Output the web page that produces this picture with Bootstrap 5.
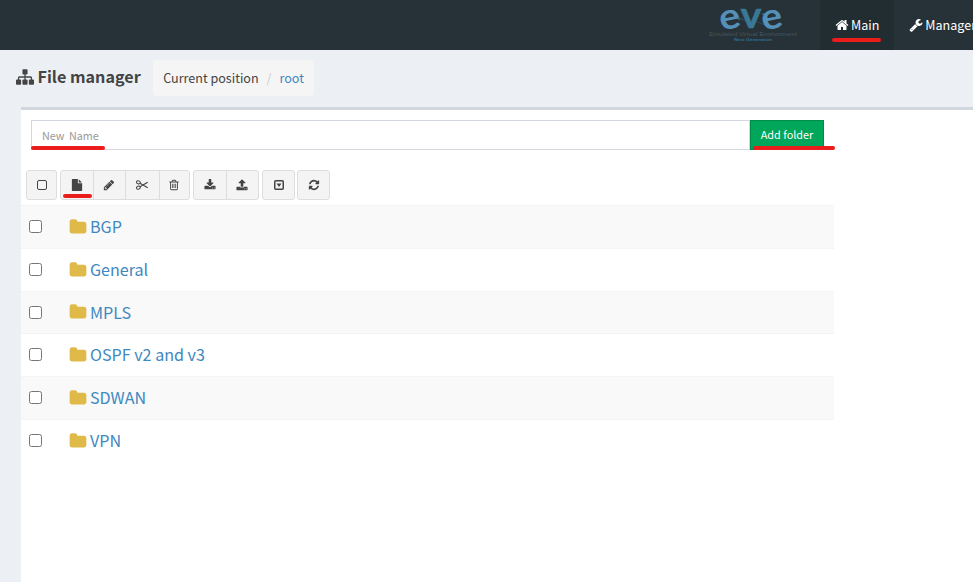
<!DOCTYPE html>
<html lang="en">
<head>
<meta charset="utf-8">
<meta name="viewport" content="width=device-width, initial-scale=1">
<title>File manager</title>
<link href="https://cdn.jsdelivr.net/npm/bootstrap@5.3.0/dist/css/bootstrap.min.css" rel="stylesheet">
<style>
body{font-family:"Noto Sans CJK SC","Noto Sans",sans-serif;font-size:12.55px;line-height:20px;color:#444;background:#ecf0f5;overflow:hidden;height:582px}
a{color:#4088c0;text-decoration:none}
svg.ico{width:12px;height:12px;fill:currentColor;flex:none;display:block}
.topbar{height:50px;background:#263238;padding:0}
.brandmark{width:100px;height:50px;margin-left:703px;margin-right:17px}
.brandmark svg{display:block;overflow:visible}
.topbar .nav-link{height:50px;color:#fff;padding:0 15px;gap:2px;white-space:nowrap;line-height:50px}
.topbar .nav-link.active{background:#222d32}
.topbar .ico{width:14px;height:14px}
.marked{position:relative}
.marked::after{content:"";position:absolute;height:4px;border-radius:2px;background:#ea1c1c;z-index:6;left:var(--l);right:var(--r);bottom:var(--b)}
.mk-main{--l:12px;--r:13px;--b:8px}
.mk-name{--l:0px;--r:645px;--b:0px}
.mk-add{--l:3px;--r:-11px;--b:0px}
.mk-file{--l:2px;--r:1px;--b:1px}
.pagehead{height:57px;padding:10px 0 0 16px}
.pagehead h1{font-size:16.15px;font-weight:700;line-height:32px;gap:3.5px}
.pagehead h1 .ico{width:18px;height:18px;margin-top:1px}
.crumbs{height:36px;border-radius:4px;background:#f5f5f5;padding:0 10px;margin-left:12.5px}
.crumbs .breadcrumb-item{line-height:36px;color:#444}
.crumbs .breadcrumb-item+.breadcrumb-item{padding-left:8px}
.crumbs .breadcrumb-item+.breadcrumb-item::before{padding-right:8px;color:#ccc}
.panelbox{margin-left:21px;height:475px;border-top:3px solid #d2d6de;background:#fff}
.newfolder{width:793px;margin-left:10px;padding-top:10px}
.newfolder .form-control{height:30px;border:1px solid #d2d6de;border-radius:0;padding:1px 10px;font-size:10.8px;word-spacing:2px;width:100%}
.newfolder .form-control::placeholder{color:#999;opacity:1}
.btn-add{height:30px;width:74px;border:1px solid #008d4c;background:#00a65a;color:#fff;border-radius:0;font-size:10.85px;padding:0 0 2px;line-height:26px}
.tools{padding:20px 0 0 5px;gap:3px}
.tools .btn{height:30px;border:1px solid #ddd;background:#f4f4f4;color:#444;border-radius:3px;padding:0;display:flex;align-items:center;justify-content:center}
.tools .btn-group>.btn:not(:last-child){border-top-right-radius:0;border-bottom-right-radius:0}
.tools .btn-group>.btn:not(:first-child){border-top-left-radius:0;border-bottom-left-radius:0}
.tools .btn-group .ico{margin-right:1px}
.w31{width:31px}.w33{width:33px}.w34{width:34px}.w35{width:35px}
.tools .btn-last{margin-left:-1px}
.folders{width:813px;margin-top:5px}
.folderrow{height:42.75px;border-top:1px solid #f4f4f4;padding-left:8px}
.folderrow:nth-child(odd){background:#f9f9f9}
.folderrow .form-check-input{width:13px;height:13px;margin:0 0 .4px;border:1px solid #767676;border-radius:2.5px;background:#fff}
.folderrow a{margin-left:27px;font-size:16.1px;gap:3px}
.folderrow a span{line-height:24px;padding-bottom:1.6px}
.folderrow .ico{width:18px;height:18px;color:#dfba49}
</style>
<script src="https://cdn.jsdelivr.net/npm/bootstrap@5.3.0/dist/js/bootstrap.bundle.min.js"></script>
</head>
<body>
<nav class="topbar d-flex">
  <a class="brandmark flex-shrink-0" href="#" aria-label="EVE">
    <svg width="100" height="50" viewBox="0 0 100 50">
      <g stroke="#31586a" stroke-width=".6" fill="#3a6f8a"><path d="M28 12 45 23M60 13 67 20M36 19 50 20 64 26" fill="none"/><circle cx="36" cy="19" r="1"/><circle cx="60" cy="14" r="1"/><circle cx="65" cy="20" r="1"/></g>
      <g font-family="Lato,sans-serif" font-weight="700" font-size="36">
        <text x="16.500" y="28.800" fill="#5590b8" textLength="21" lengthAdjust="spacingAndGlyphs" transform="rotate(-12 27 20)">e</text>
        <text x="37.500" y="28.300" fill="#3a7896" stroke="#3a7896" stroke-width=".5" textLength="21" lengthAdjust="spacingAndGlyphs">v</text>
        <text x="58.500" y="28.800" fill="#5590b8" textLength="21" lengthAdjust="spacingAndGlyphs" transform="rotate(-12 69 20)">e</text>
      </g>
      <text x="6" y="36" fill="#48545b" font-family="Liberation Sans,sans-serif" font-size="5.500" textLength="88" lengthAdjust="spacingAndGlyphs">Emulated Virtual Environment</text>
      <text x="31" y="41.300" fill="#32718d" font-family="Liberation Sans,sans-serif" font-weight="700" font-size="4" textLength="38" lengthAdjust="spacingAndGlyphs">Next Generation</text>
    </svg>
  </a>
  <a class="nav-link active d-flex align-items-center marked mk-main" href="#"><svg class="ico" viewBox="0 0 1792 1792"><path d="M1472 992v480q0 26-19 45t-45 19h-384v-384h-256v384h-384q-26 0-45-19t-19-45v-480q0-1 .5-3t.5-3l575-474 575 474q1 2 1 6zm223-69l-62 74q-8 9-21 11h-3q-13 0-21-7l-692-577-692 577q-12 8-24 7-13-2-21-11l-62-74q-8-10-7-23.500t11-21.500l719-599q32-26 76-26t76 26l244 204v-195q0-14 9-23t23-9h192q14 0 23 9t9 23v408l219 182q10 8 11 21.500t-7 23.500z"/></svg>Main</a>
  <a class="nav-link d-flex align-items-center" href="#"><svg class="ico" viewBox="0 0 1792 1792"><path d="M448 1472q0-26-19-45t-45-19-45 19-19 45 19 45 45 19 45-19 19-45zm644-420l-682 682q-37 37-90 37-52 0-91-37l-106-108q-38-36-38-90 0-53 38-91l681-681q39 98 114.500 173.500t173.500 114.500zm634-435q0 39-23 106-47 134-164.500 217.500t-258.500 83.500q-185 0-316.500-131.500t-131.500-316.500 131.500-316.500 316.500-131.500q58 0 121.500 16.500t107.500 46.500q16 11 16 28t-16 28l-293 169v224l193 107q5-3 79-48.500t135.500-81 70.500-35.500q15 0 23.500 10t8.500 25z"/></svg>Management</a>
</nav>

<header class="pagehead d-flex align-items-start">
  <h1 class="m-0 d-flex align-items-center"><svg class="ico" viewBox="0 0 1792 1792"><path d="M1792 1248v320q0 40-28 68t-68 28h-320q-40 0-68-28t-28-68v-320q0-40 28-68t68-28h96v-192h-512v192h96q40 0 68 28t28 68v320q0 40-28 68t-68 28h-320q-40 0-68-28t-28-68v-320q0-40 28-68t68-28h96v-192h-512v192h96q40 0 68 28t28 68v320q0 40-28 68t-68 28h-320q-40 0-68-28t-28-68v-320q0-40 28-68t68-28h96v-192q0-52 38-90t90-38h512v-192h-96q-40 0-68-28t-28-68v-320q0-40 28-68t68-28h320q40 0 68 28t28 68v320q0 40-28 68t-68 28h-96v192h512q52 0 90 38t38 90v192h96q40 0 68 28t28 68z"/></svg><span>File manager</span></h1>
  <ol class="breadcrumb crumbs mb-0 flex-nowrap"><li class="breadcrumb-item">Current position</li><li class="breadcrumb-item"><a href="#">root</a></li></ol>
</header>

<main class="panelbox">
  <form class="newfolder d-flex">
    <div class="flex-grow-1 marked mk-name"><input class="form-control" type="text" placeholder="New Name"></div>
    <div class="marked mk-add"><button class="btn btn-add d-block" type="button">Add folder</button></div>
  </form>
  <div class="tools d-flex">
    <button class="btn w31" type="button" aria-label="Select all"><svg class="ico" viewBox="0 0 12 12"><rect x="1.500" y="1.500" width="9" height="9" rx="1.500" fill="none" stroke="currentColor"/></svg></button>
    <div class="btn-group">
      <button class="btn w34 marked mk-file" type="button" aria-label="New lab"><svg class="ico" viewBox="0 0 1792 1792"><path d="M1152 512v-472q22 14 36 28l408 408q14 14 28 36h-472zm-128 32q0 40 28 68t68 28h544v1056q0 40-28 68t-68 28h-1344q-40 0-68-28t-28-68v-1600q0-40 28-68t68-28h800v544z"/></svg></button>
      <button class="btn w33" type="button" aria-label="Rename"><svg class="ico" viewBox="0 0 1792 1792"><path d="M491 1536l91-91-235-235-91 91v107h128v128h107zm523-928q0-22-22-22-10 0-17 7l-542 542q-7 7-7 17 0 22 22 22 10 0 17-7l542-542q7-7 7-17zm-54-192l416 416-832 832h-416v-416zm683 96q0 53-37 90l-166 166-416-416 166-165q36-38 90-38 53 0 91 38l235 234q37 39 37 91z"/></svg></button>
      <button class="btn w35" type="button" aria-label="Cut"><svg class="ico" viewBox="0 0 12 12"><g fill="none" stroke="currentColor"><ellipse cx="2.400" cy="3.300" rx="1.900" ry="1.500" transform="rotate(20 2.400 3.300)"/><ellipse cx="2.400" cy="8.700" rx="1.900" ry="1.500" transform="rotate(-20 2.400 8.700)"/><path d="M4 4.300 11.700 8.800M4 7.700 11.700 3.200" stroke-width="1.100"/></g></svg></button>
      <button class="btn w31" type="button" aria-label="Delete"><svg class="ico" viewBox="0 0 1792 1792"><path d="M704 736v576q0 14-9 23t-23 9h-64q-14 0-23-9t-9-23v-576q0-14 9-23t23-9h64q14 0 23 9t9 23zm256 0v576q0 14-9 23t-23 9h-64q-14 0-23-9t-9-23v-576q0-14 9-23t23-9h64q14 0 23 9t9 23zm256 0v576q0 14-9 23t-23 9h-64q-14 0-23-9t-9-23v-576q0-14 9-23t23-9h64q14 0 23 9t9 23zm128 724v-948h-896v948q0 22 7 40.500t14.500 27 10.500 8.500h832q3 0 10.500-8.500t14.500-27 7-40.500zm-672-1076h448l-48-117q-7-9-17-11h-317q-10 2-17 11zm928 32v64q0 14-9 23t-23 9h-96v948q0 83-47 143.500t-113 60.500h-832q-66 0-113-58.500t-47-141.500v-952h-96q-14 0-23-9t-9-23v-64q0-14 9-23t23-9h309l70-167q15-37 54-63t79-26h320q40 0 79 26t54 63l70 167h309q14 0 23 9t9 23z"/></svg></button>
    </div>
    <div class="btn-group">
      <button class="btn w34" type="button" aria-label="Import"><svg class="ico" viewBox="0 0 1792 1792"><path d="M1344 1344q0-26-19-45t-45-19-45 19-19 45 19 45 45 19 45-19 19-45zm256 0q0-26-19-45t-45-19-45 19-19 45 19 45 45 19 45-19 19-45zm128-224v320q0 40-28 68t-68 28h-1472q-40 0-68-28t-28-68v-320q0-40 28-68t68-28h465l135 136q58 56 136 56t136-56l136-136h464q40 0 68 28t28 68zm-325-569q17 41-14 70l-448 448q-18 19-45 19t-45-19l-448-448q-31-29-14-70 17-39 59-39h256v-448q0-26 19-45t45-19h256q26 0 45 19t19 45v448h256q42 0 59 39z"/></svg></button>
      <button class="btn w33" type="button" aria-label="Export"><svg class="ico" viewBox="0 0 1792 1792"><path d="M1344 1472q0-26-19-45t-45-19-45 19-19 45 19 45 45 19 45-19 19-45zm256 0q0-26-19-45t-45-19-45 19-19 45 19 45 45 19 45-19 19-45zm128-224v320q0 40-28 68t-68 28h-1472q-40 0-68-28t-28-68v-320q0-40 28-68t68-28h427q21 56 70.500 92t110.500 36h256q61 0 110.500-36t70.500-92h427q40 0 68 28t28 68zm-325-648q-17 40-59 40h-256v448q0 26-19 45t-45 19h-256q-26 0-45-19t-19-45v-448h-256q-42 0-59-40-17-39 14-69l448-448q18-19 45-19t45 19l448 448q31 30 14 69z"/></svg></button>
    </div>
    <button class="btn w33" type="button" aria-label="More"><svg class="ico" viewBox="0 0 12 12"><rect x="1.750" y="1.750" width="8.500" height="8.500" rx="1" fill="none" stroke="currentColor" stroke-width="1.500"/><path d="M3.500 4.500h5L6 8z"/></svg></button>
    <button class="btn w33 btn-last" type="button" aria-label="Refresh"><svg class="ico" viewBox="0 0 1792 1792"><path d="M1639 1056q0 5-1 7-64 268-268 434.500t-478 166.500q-146 0-282.500-55t-243.500-157l-129 129q-19 19-45 19t-45-19-19-45v-448q0-26 19-45t45-19h448q26 0 45 19t19 45-19 45l-137 137q71 66 161 102t187 36q134 0 250-65t186-179q11-17 53-117 8-23 30-23h192q13 0 22.500 9.500t9.500 22.500zm25-800v448q0 26-19 45t-45 19h-448q-26 0-45-19t-19-45 19-45l138-138q-148-137-349-137-134 0-250 65t-186 179q-11 17-53 117-8 23-30 23h-199q-13 0-22.500-9.500t-9.500-22.500v-7q65-268 270-434.500t480-166.500q146 0 284 55.500t245 156.500l130-129q19-19 45-19t45 19 19 45z"/></svg></button>
  </div>
  <svg class="d-none"><symbol id="folder" viewBox="0 0 1792 1792"><path d="M1728 608v704q0 92-66 158t-158 66h-1216q-92 0-158-66t-66-158v-960q0-92 66-158t158-66h320q92 0 158 66t66 158v32h672q92 0 158 66t66 158z"/></symbol></svg>
  <div class="folders">
    <div class="folderrow d-flex align-items-center"><input class="form-check-input" type="checkbox"><a class="d-flex align-items-center" href="#"><svg class="ico"><use href="#folder"/></svg><span>BGP</span></a></div>
    <div class="folderrow d-flex align-items-center"><input class="form-check-input" type="checkbox"><a class="d-flex align-items-center" href="#"><svg class="ico"><use href="#folder"/></svg><span>General</span></a></div>
    <div class="folderrow d-flex align-items-center"><input class="form-check-input" type="checkbox"><a class="d-flex align-items-center" href="#"><svg class="ico"><use href="#folder"/></svg><span>MPLS</span></a></div>
    <div class="folderrow d-flex align-items-center"><input class="form-check-input" type="checkbox"><a class="d-flex align-items-center" href="#"><svg class="ico"><use href="#folder"/></svg><span>OSPF v2 and v3</span></a></div>
    <div class="folderrow d-flex align-items-center"><input class="form-check-input" type="checkbox"><a class="d-flex align-items-center" href="#"><svg class="ico"><use href="#folder"/></svg><span>SDWAN</span></a></div>
    <div class="folderrow d-flex align-items-center"><input class="form-check-input" type="checkbox"><a class="d-flex align-items-center" href="#"><svg class="ico"><use href="#folder"/></svg><span>VPN</span></a></div>
  </div>
</main>
</body>
</html>
